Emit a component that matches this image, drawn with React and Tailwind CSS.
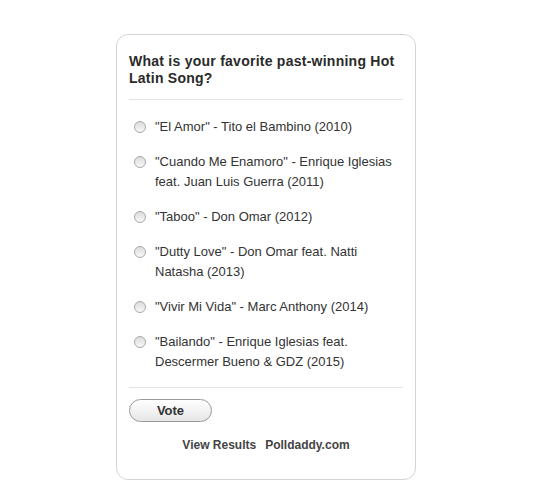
import React from "react";

const OPTIONS = [
  '"El Amor" - Tito el Bambino (2010)',
  '"Cuando Me Enamoro" - Enrique Iglesias feat. Juan Luis Guerra (2011)',
  '"Taboo" - Don Omar (2012)',
  '"Dutty Love" - Don Omar feat. Natti Natasha (2013)',
  '"Vivir Mi Vida" - Marc Anthony (2014)',
  '"Bailando" - Enrique Iglesias feat. Descermer Bueno & GDZ (2015)',
];

const Radio = () => (
  <span className="mt-[4px] h-[12px] w-[12px] shrink-0 rounded-full border border-[#a9a9a9] bg-gradient-to-b from-[#dcdcdc] to-[#f8f8f8]" />
);

export default function App() {
  return (
    <div
      className="min-h-[495px] bg-white pt-[34px]"
      style={{ fontFamily: '"Liberation Sans", Arial, sans-serif' }}
    >
      <div className="ml-[116px] h-[446px] w-[300px] rounded-[12px] border border-[#d4d4d4] px-[12px] pt-[18px]">
        <h2 className="pb-[12px] text-[14px] font-bold leading-[17px] tracking-[0.25px] text-[#2a2a2a]">
          What is your favorite past-winning Hot Latin Song?
        </h2>
        <div className="border-t border-[#e2e2e2]" />

        <ul className="px-[5px] pt-[17px]">
          {OPTIONS.map((opt) => (
            <li key={opt} className="flex gap-[9px] pb-[15px]">
              <Radio />
              <span className="text-[13px] leading-[20px] text-[#333]">{opt}</span>
            </li>
          ))}
        </ul>

        <div className="border-t border-[#e2e2e2]" />

        <button className="mt-[11px] h-[23px] w-[83px] rounded-full border border-[#999] bg-gradient-to-b from-white to-[#e6e6e6] text-[13px] font-bold text-[#333]">
          Vote
        </button>

        <div className="mt-[14px] flex justify-center gap-[9px] text-[12px] font-bold text-[#444]">
          <span>View Results</span>
          <span>Polldaddy.com</span>
        </div>
      </div>
    </div>
  );
}
